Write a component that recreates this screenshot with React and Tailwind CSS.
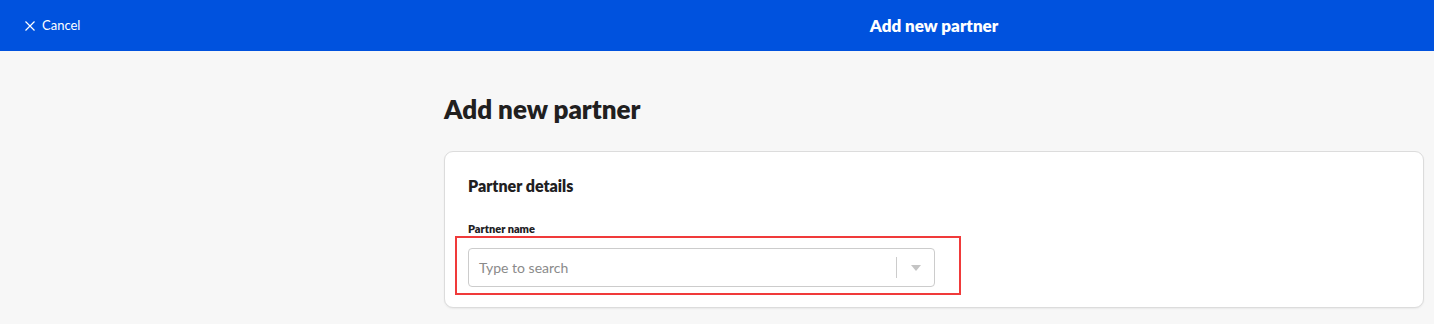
export default function App() {
  return (
    <div className="min-h-[324px] w-full bg-[#f7f7f7]" style={{ fontFamily: "Lato, 'Open Sans', sans-serif" }}>
      <header className="flex h-[51px] items-center bg-[#0052de] text-white">
        <div className="flex w-[444px] items-center pl-[25px]">
          <button className="flex items-center gap-[7px] text-[13px] leading-none text-white">
            <svg width="10" height="10" viewBox="0 0 10 10" fill="none" stroke="currentColor" strokeWidth="1.2">
              <path d="M0.5 0.5L9.5 9.5M9.5 0.5L0.5 9.5" />
            </svg>
            <span>Cancel</span>
          </button>
        </div>
        <div className="mr-[10px] flex flex-1 justify-center">
          <span className="text-[17px] font-extrabold">Add new partner</span>
        </div>
      </header>
      <main className="flex">
        <div className="w-[444px] shrink-0" />
        <div className="mr-[10px] flex-1 pt-[43px]">
          <h1 className="text-[26px] font-extrabold leading-[30px] text-[#21201f]">Add new partner</h1>
          <section className="mt-[27px] h-[157px] rounded-[9px] border border-[#dcdcdc] bg-white px-[23px] pt-[24px] shadow-[0_1px_2px_rgba(0,0,0,0.06)]">
            <h2 className="text-[16px] font-extrabold leading-[20px] text-[#21201f]">Partner details</h2>
            <div className="relative mt-[26px]">
              <label className="block text-[11px] font-extrabold leading-[14px] text-[#21201f]">Partner name</label>
              <div className="pointer-events-none absolute left-[-13px] top-[14px] h-[59px] w-[506px] border-2 border-[#f03a3a]" />
              <div className="mt-[12px] flex h-[39px] w-[467px] items-center rounded-[4px] border border-[#cccccc] bg-white">
                <span className="flex-1 pl-[10px] text-[14px] text-[#8a8a8a]">Type to search</span>
                <div className="h-[21px] w-px bg-[#cccccc]" />
                <div className="flex w-[37px] items-center justify-center">
                  <svg width="10" height="6" viewBox="0 0 10 6">
                    <path d="M0 0H10L5 6Z" fill="#c4c4c4" />
                  </svg>
                </div>
              </div>
            </div>
          </section>
        </div>
      </main>
    </div>
  );
}
